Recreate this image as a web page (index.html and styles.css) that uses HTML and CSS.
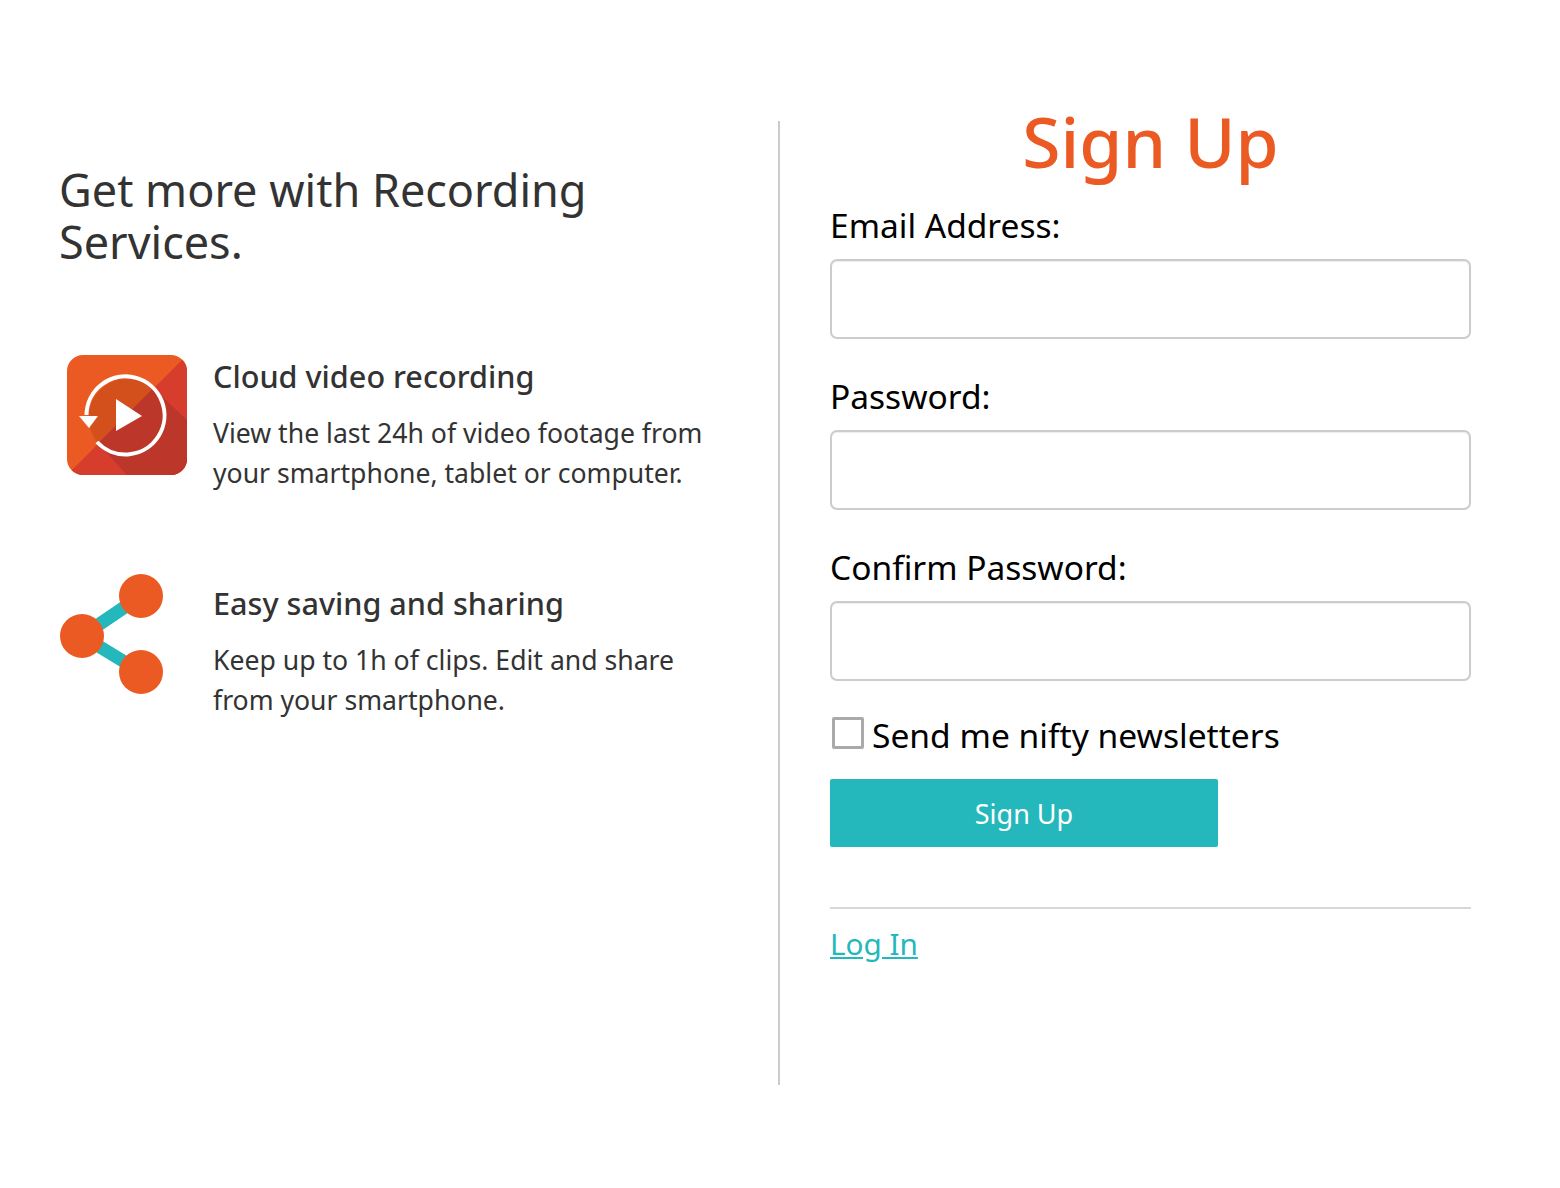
FILE: index.html
```html
<!DOCTYPE html>
<html lang="en">
<head>
<meta charset="utf-8">
<title>Sign Up</title>
<link rel="stylesheet" href="styles.css">
</head>
<body>
<main class="page">
  <section class="promo">
    <h2 class="promo-title">Get more with Recording Services.</h2>
    <div class="feature feature-cloud">
      <svg class="icon-cloud" viewBox="0 0 120 120" width="120" height="120" aria-hidden="true">
        <defs><clipPath id="tile"><rect width="120" height="120" rx="16"/></clipPath></defs>
        <g clip-path="url(#tile)">
          <rect width="120" height="120" fill="#ec5a24"/>
          <path d="M120 0V120H0Z" fill="#d63d2c"/>
          <path d="M86 33L120 65V120H60L31 88Z" fill="#bc3629"/>
          <path d="M31 88A39 39 0 0 1 86 33Z" fill="#d34f1c"/>
          <path d="M19.5 60A39 39 0 1 1 30 87" fill="none" stroke="#fff" stroke-width="4"/>
          <path d="M12 61H31L22 73Z" fill="#fff"/>
          <path d="M49 44L75 61L49 76Z" fill="#fff"/>
        </g>
      </svg>
      <div class="feature-text">
        <h3 class="feature-title">Cloud video recording</h3>
        <p class="feature-desc">View the last 24h of video footage from your smartphone, tablet or computer.</p>
      </div>
    </div>
    <div class="feature feature-share">
      <svg class="icon-share" viewBox="0 0 104 120" width="104" height="120" aria-hidden="true">
        <path d="M22 62L81 22M22 62L81 98" stroke="#24b8bc" stroke-width="13" fill="none"/>
        <circle cx="81" cy="22" r="22" fill="#ec5a24"/>
        <circle cx="22" cy="62" r="22" fill="#ec5a24"/>
        <circle cx="81" cy="98" r="22" fill="#ec5a24"/>
      </svg>
      <div class="feature-text">
        <h3 class="feature-title">Easy saving and sharing</h3>
        <p class="feature-desc">Keep up to 1h of clips. Edit and share from your smartphone.</p>
      </div>
    </div>
  </section>
  <section class="signup">
    <h1 class="signup-title">Sign Up</h1>
    <form class="form">
      <label class="field"><span class="field-label">Email Address:</span><input class="input" type="email"></label>
      <label class="field"><span class="field-label">Password:</span><input class="input" type="password"></label>
      <label class="field"><span class="field-label">Confirm Password:</span><input class="input" type="password"></label>
      <label class="check"><span class="box"></span><span>Send me nifty newsletters</span></label>
      <button class="submit" type="button">Sign Up</button>
    </form>
    <hr class="rule">
    <a class="login" href="#">Log In</a>
  </section>
</main>
</body>
</html>
```

FILE: styles.css
```css
* { box-sizing: border-box; }
html, body { margin: 0; background: #fff; }
body { font-family: "Noto Sans", "Open Sans", sans-serif; height: 1188px; }
.page { display: flex; padding-top: 121px; }
.promo { width: 780px; height: 964px; border-right: 2px solid #ccc; padding: 43px 60px 0 59px; color: #333; }
.promo-title { margin: 0; font-size: 45px; font-weight: 400; line-height: 52px; color: #333; }
.feature { display: flex; }
.feature-cloud { margin-top: 87px; padding-left: 8px; gap: 26px; }
.feature-share { margin-top: 81px; padding-left: 1px; gap: 49px; }
.icon-cloud, .icon-share { flex: none; }
.feature-text { flex: 1; min-width: 0; }
.feature-cloud .feature-text { padding-top: 1px; }
.feature-share .feature-text { padding-top: 9px; }
.feature-title { margin: 0; font-size: 30.6px; font-weight: 500; line-height: 40px; }
.feature-desc { margin: 17px 0 0; font-size: 26.6px; line-height: 40px; }
.signup { width: 641px; margin-left: 50px; }
.signup-title { margin: -16px 0 0; text-align: center; font-size: 69.6px; font-weight: 500; line-height: 72px; color: #ec5a24; }
.form { display: flex; flex-direction: column; margin-top: 9px; }
.field { display: block; margin-top: 16px; margin-bottom: 18px; }
.field-label { display: block; font-size: 33.5px; line-height: 46px; color: #000; }
.input { display: block; width: 100%; height: 80px; margin-top: 11px; border: 2px solid #ccc; border-radius: 7px; background: #fff; box-shadow: inset 0 1px 1px rgba(0,0,0,.075); }
.check { display: flex; align-items: center; gap: 8px; font-size: 33.6px; line-height: 46px; color: #000; margin-top: 13px; padding-left: 2px; }
.box { width: 32px; height: 32px; margin-bottom: 4px; border: 3px solid #aaa; border-radius: 2px; background: #fff; }
.submit { width: 388px; height: 68px; margin-top: 21px; border: 0; border-radius: 2px; background: #24b8bc; color: #fff; font-family: inherit; font-size: 27px; }
.rule { margin: 60px 0 0; border: 0; border-top: 2px solid #d4d9dc; }
.login { display: inline-block; margin-top: 15px; font-size: 29.7px; line-height: 40px; color: #24b8bc; text-decoration: underline; }
```
